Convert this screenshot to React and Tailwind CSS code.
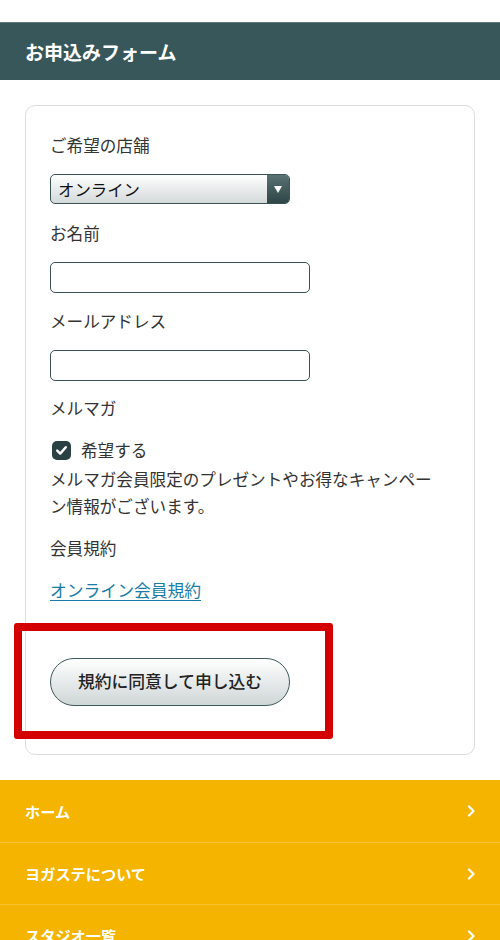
import React from "react";

const font = { fontFamily: '"Noto Sans CJK JP", "Noto Sans", sans-serif' };

function Chevron() {
  return (
    <svg width="9" height="12" viewBox="0 0 9 12" fill="none">
      <path d="M2 1.5 L6.5 6 L2 10.5" stroke="#ffffff" strokeWidth="2.2" strokeLinecap="round" strokeLinejoin="round" />
    </svg>
  );
}

export default function App() {
  const nav = ["ホーム", "ヨガステについて", "スタジオ一覧"];
  return (
    <div className="w-[500px] h-[940px] overflow-hidden bg-white text-[#333333]" style={font}>
      <div className="h-[22px]" />
      <div className="h-[58px] bg-[#37575a] border-t border-[#5f7a7c] flex items-center px-[25px]">
        <h1 className="text-[19px] font-bold text-white leading-none">お申込みフォーム</h1>
      </div>

      <div className="mx-[25px] mt-[25px] border border-[#dcdcdc] rounded-[10px] px-[24px] pt-[27px] pb-[48px]">
        <div className="text-[16.6px] leading-[24px]">ご希望の店舗</div>
        <div className="mt-[17px] w-[240px] h-[30px] rounded-[5px] border border-[#3c5356] flex overflow-hidden bg-gradient-to-b from-white to-[#d3d9d9]">
          <div className="flex-1 flex items-center pl-[7px] text-[16.4px] text-[#111]">オンライン</div>
          <div className="w-[22px] bg-gradient-to-b from-[#5b7274] to-[#2f4647] flex items-center justify-center">
            <svg width="8" height="7" viewBox="0 0 8 7"><path d="M0 0 H8 L4 7 Z" fill="#ffffff" /></svg>
          </div>
        </div>

        <div className="mt-[17px] text-[16.6px] leading-[24px]">お名前</div>
        <div className="mt-[17px] w-[260px] h-[31px] rounded-[5px] border-[1.5px] border-[#3a5254] bg-white" />

        <div className="mt-[16px] text-[16.6px] leading-[24px]">メールアドレス</div>
        <div className="mt-[17px] w-[260px] h-[31px] rounded-[5px] border-[1.5px] border-[#3a5254] bg-white" />

        <div className="mt-[15px] text-[16.6px] leading-[24px]">メルマガ</div>
        <div className="mt-[18px] flex items-center h-[24px] pl-[2px] gap-[10px]">
          <div className="w-[19px] h-[19px] rounded-[5px] bg-[#2a4143] flex items-center justify-center">
            <svg width="15" height="15" viewBox="0 0 15 15" fill="none">
              <path d="M3.2 7.6 L6.2 10.6 L11.8 4.2" stroke="#ffffff" strokeWidth="2.4" strokeLinecap="round" strokeLinejoin="round" />
            </svg>
          </div>
          <span className="text-[16.6px] leading-[24px]">希望する</span>
        </div>
        <p className="mt-[4px] text-[16.6px] leading-[27px]">
          メルマガ会員限定のプレゼントやお得なキャンペー<br />ン情報がございます。
        </p>

        <div className="mt-[16px] text-[16.6px] leading-[24px]">会員規約</div>
        <div className="mt-[18px] text-[16.8px] leading-[24px]">
          <a className="text-[#1a7ca6] underline underline-offset-[3px]">オンライン会員規約</a>
        </div>

        <div className="relative mt-[56px] w-[240px]">
          <div className="absolute left-[-36px] top-[-35px] w-[319px] h-[116px] border-[8px] border-[#d40000] rounded-[3px] pointer-events-none" />
          <button className="w-[240px] h-[48px] rounded-full border-[1.5px] border-[#3e5a5c] bg-gradient-to-b from-white to-[#cfd6d6] text-[16.8px] text-[#222] font-medium">
            規約に同意して申し込む
          </button>
        </div>
      </div>

      <div className="mt-[25px] bg-[#f5b400]">
        {nav.map((t, i) => (
          <div key={t} className={`h-[62px] flex items-center justify-between pl-[25px] pr-[24px] ${i > 0 ? "border-t border-[#f7c230]" : ""}`}>
            <span className="text-[15.2px] font-bold text-white">{t}</span>
            <Chevron />
          </div>
        ))}
      </div>
    </div>
  );
}
